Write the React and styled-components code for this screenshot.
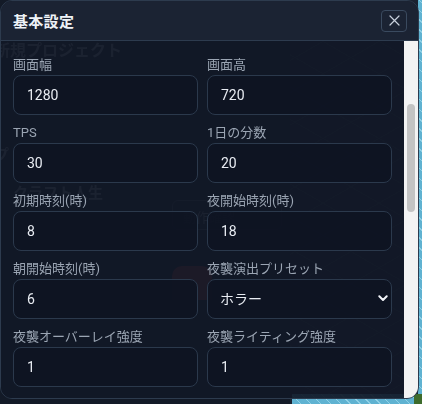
import * as React from "react";
import styled, { createGlobalStyle } from "styled-components";

const GlobalStyle = createGlobalStyle`
  html, body {
    margin: 0;
    width: 100%;
    height: 100%;
    overflow: hidden;
    background: #1b2332;
  }
  body {
    font-family: Roboto, "Noto Sans CJK JP", sans-serif;
  }
  #root {
    width: 100%;
    height: 100%;
  }
`;

// ---- scene behind the dialog ----

const Scene = styled.div`
  position: fixed;
  inset: 0;
  background-color: #1a2231;
  background-image:
    repeating-linear-gradient(30deg, transparent 0 27px, #2c3748 27px 28px),
    repeating-linear-gradient(-30deg, transparent 0 27px, #2c3748 27px 28px);
`;

const SidePanel = styled.div`
  position: absolute;
  left: 0;
  top: 0;
  width: 290px;
  height: 100%;
  background: #131a27;
`;

const SceneText = styled.div`
  position: absolute;
  left: ${(p) => p.$x}px;
  top: ${(p) => p.$y}px;
  font-size: ${(p) => p.$size}px;
  font-weight: 700;
  color: #8e99a8;
  white-space: nowrap;
`;

const SceneButton = styled.div`
  position: absolute;
  left: 172px;
  top: 200px;
  width: 110px;
  height: 30px;
  border: 1px solid #3f4a5b;
  border-radius: 6px;
  font-size: 13px;
  color: #7d8898;
  padding: 6px 10px;
  box-sizing: border-box;
`;

const RedBlob = styled.div`
  position: absolute;
  left: 172px;
  top: 266px;
  width: 40px;
  height: 34px;
  border-radius: 10px 10px 0 0;
  background: #9c3434;
`;

const Water = styled.div`
  position: absolute;
  left: ${(p) => p.$x}px;
  top: ${(p) => p.$y}px;
  width: ${(p) => p.$w}px;
  height: ${(p) => p.$h}px;
  background-color: #5fb2d1;
  background-image: repeating-linear-gradient(
    45deg,
    transparent 0 6px,
    #8fd0e6 6px 7px
  );
`;

const Grass = styled.div`
  position: absolute;
  right: 0;
  bottom: 0;
  width: 8px;
  height: 10px;
  background: #3d6b2c;
`;

// ---- dialog ----

const Modal = styled.div`
  position: absolute;
  left: 0;
  top: 0;
  width: 419px;
  height: 399px;
  box-sizing: border-box;
  border: 1px solid #2d3b4e;
  border-radius: 12px;
  overflow: hidden;
  display: flex;
  flex-direction: column;
`;

const Header = styled.div`
  height: 39px;
  flex-shrink: 0;
  display: flex;
  align-items: center;
  justify-content: space-between;
  padding: 0 11px 0 12px;
  background: #1b2333;
  border-bottom: 1px solid #2d3b4e;
`;

const Title = styled.h2`
  margin: 0;
  font-size: 15px;
  font-weight: 700;
  color: #eef2f7;
  letter-spacing: 0.3px;
`;

const CloseButton = styled.button`
  width: 26px;
  height: 22px;
  padding: 0;
  display: flex;
  align-items: center;
  justify-content: center;
  background: transparent;
  border: 1px solid #3a4a5f;
  border-radius: 4px;
  color: #c7d0dc;
`;

const Body = styled.div`
  flex: 1;
  min-height: 0;
  display: flex;
  background: rgba(17, 24, 38, 0.92);
`;

const Content = styled.div`
  flex: 1;
  overflow: hidden;
  padding: 16px 12px 0 12px;
`;

const FieldGrid = styled.div`
  display: grid;
  grid-template-columns: 1fr 1fr;
  column-gap: 9px;
  row-gap: 10px;
`;

const Field = styled.label`
  display: flex;
  flex-direction: column;
`;

const Label = styled.span`
  font-size: 13px;
  line-height: 16px;
  color: #9ba5b3;
  margin-bottom: 2px;
  white-space: nowrap;
`;

const Input = styled.input`
  height: 40px;
  box-sizing: border-box;
  width: 100%;
  border: 1px solid #2b394c;
  border-radius: 8px;
  background: rgba(14, 20, 34, 0.9);
  color: #e8ecf2;
  font-family: Roboto, "Noto Sans CJK JP", sans-serif;
  font-size: 14px;
  padding: 0 13px;
  outline: none;
`;

const SelectWrap = styled.div`
  position: relative;
`;

const Select = styled(Input).attrs({ as: "select" })`
  appearance: none;
  -webkit-appearance: none;
  padding: 0 12px;
`;

const Chevron = styled.svg`
  position: absolute;
  right: 4px;
  top: 16px;
  pointer-events: none;
`;

const Track = styled.div`
  width: 14px;
  flex-shrink: 0;
  background: #f3f3f3;
  padding-top: 63px;
  box-sizing: border-box;
`;

const Thumb = styled.div`
  width: 8px;
  height: 108px;
  margin-left: 3px;
  border-radius: 4px;
  background: #c3c3c3;
`;

const fields = [
  { label: "画面幅", value: "1280" },
  { label: "画面高", value: "720" },
  { label: "TPS", value: "30" },
  { label: "1日の分数", value: "20" },
  { label: "初期時刻(時)", value: "8" },
  { label: "夜開始時刻(時)", value: "18" },
  { label: "朝開始時刻(時)", value: "6" },
  { label: "夜襲演出プリセット", value: "ホラー", select: true },
  { label: "夜襲オーバーレイ強度", value: "1" },
  { label: "夜襲ライティング強度", value: "1" },
];

export default function App() {
  return (
    <>
      <GlobalStyle />
      <Scene>
        <SidePanel>
          <SceneText $x={-6} $y={37} $size={16}>
            新規プロジェクト
          </SceneText>
          <SceneText $x={-6} $y={143} $size={15}>
            プ
          </SceneText>
          <SceneText $x={13} $y={181} $size={15}>
            クラフト人生
          </SceneText>
          <SceneButton>動作確認</SceneButton>
          <RedBlob />
        </SidePanel>
        <Water $x={292} $y={394} $w={130} $h={10} />
        <Water $x={418} $y={0} $w={4} $h={404} />
        <Grass />
      </Scene>

      <Modal>
        <Header>
          <Title>基本設定</Title>
          <CloseButton aria-label="閉じる">
            <svg width="11" height="11" viewBox="0 0 11 11">
              <path
                d="M1 1 L10 10 M10 1 L1 10"
                stroke="currentColor"
                strokeWidth="1.2"
                strokeLinecap="round"
              />
            </svg>
          </CloseButton>
        </Header>
        <Body>
          <Content>
            <FieldGrid>
              {fields.map((f) => (
                <Field key={f.label}>
                  <Label>{f.label}</Label>
                  {f.select ? (
                    <SelectWrap>
                      <Select defaultValue={f.value}>
                        <option>ホラー</option>
                        <option>標準</option>
                      </Select>
                      <Chevron width="10" height="7" viewBox="0 0 10 7">
                        <path
                          d="M1.3 1.3 L5 5 L8.7 1.3"
                          fill="none"
                          stroke="#f1f4f8"
                          strokeWidth="2"
                          strokeLinecap="round"
                          strokeLinejoin="round"
                        />
                      </Chevron>
                    </SelectWrap>
                  ) : (
                    <Input defaultValue={f.value} />
                  )}
                </Field>
              ))}
            </FieldGrid>
          </Content>
          <Track>
            <Thumb />
          </Track>
        </Body>
      </Modal>
    </>
  );
}
